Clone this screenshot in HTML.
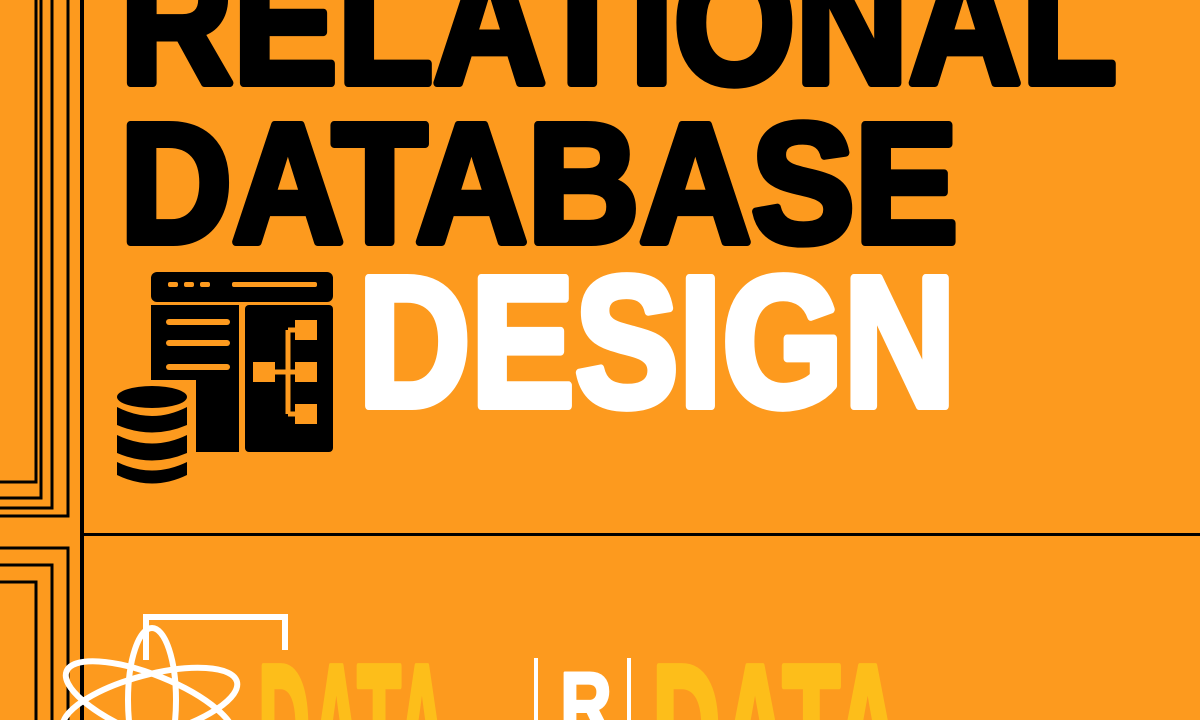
<!DOCTYPE html>
<html><head><style>
html,body{margin:0;padding:0;background:#FD9A1E;width:1200px;height:720px;overflow:hidden;}
svg{display:block}
</style></head><body>
<svg width="1200" height="720" viewBox="0 0 1200 720" xmlns="http://www.w3.org/2000/svg">
<rect width="1200" height="720" fill="#FD9A1E"/>
<g fill="none" stroke="#000" stroke-width="3">
<path d="M36 0 V482 H0"/>
<path d="M41 0 V498 H0"/>
<path d="M52 0 V508 H0"/>
<path d="M68 0 V516 H0"/>
<path d="M36 720 V582 H0"/>
<path d="M52 720 V565 H0"/>
<path d="M68 720 V548 H0"/>
</g>
<rect x="80" y="0" width="4" height="720" fill="#000"/>
<rect x="80" y="533" width="1120" height="3" fill="#000"/>
<g font-family="Liberation Sans, sans-serif" font-weight="bold" stroke-linejoin="round">
<text x="120" y="83" textLength="997" lengthAdjust="spacingAndGlyphs" font-size="174" fill="#000" stroke="#000" stroke-width="8">RELATIONAL</text>
<text x="120" y="242" textLength="838" lengthAdjust="spacingAndGlyphs" font-size="170" fill="#000" stroke="#000" stroke-width="8">DATABASE</text>
<text x="358" y="406" textLength="598" lengthAdjust="spacingAndGlyphs" font-size="186" fill="#fff" stroke="#fff" stroke-width="8">DESIGN</text>
</g>
<g>
<rect x="151" y="272" width="182" height="30" rx="6" fill="#000"/>
<rect x="168" y="282" width="10" height="5" rx="2" fill="#FD9A1E"/>
<rect x="184" y="282" width="10" height="5" rx="2" fill="#FD9A1E"/>
<rect x="200" y="282" width="10" height="5" rx="2" fill="#FD9A1E"/>
<rect x="232" y="282" width="85" height="5" rx="2" fill="#FD9A1E"/>
<rect x="151" y="305" width="88" height="147" fill="#000"/>
<rect x="245" y="305" width="88" height="147" rx="4" fill="#000"/>
<rect x="166" y="319" width="64" height="6" rx="3" fill="#FD9A1E"/>
<rect x="166" y="340" width="64" height="6" rx="3" fill="#FD9A1E"/>
<rect x="166" y="364" width="64" height="6" rx="3" fill="#FD9A1E"/>
<rect x="253" y="362" width="22" height="20" fill="#FD9A1E"/>
<rect x="295" y="320" width="22" height="20" fill="#FD9A1E"/>
<rect x="295" y="362" width="22" height="20" fill="#FD9A1E"/>
<rect x="295" y="404" width="22" height="20" fill="#FD9A1E"/>
<path d="M275 372 H288 M288 330 V414 M288 330 H295 M288 372 H295 M288 414 H295" stroke="#FD9A1E" stroke-width="5" fill="none"/>
<rect x="112" y="380" width="84" height="110" fill="#FD9A1E"/>
<ellipse cx="152" cy="397" rx="35" ry="11" fill="#000"/>
<path d="M117 407 Q152 425 187 407 V425 Q152 440 117 425Z" fill="#000"/>
<path d="M117 435 Q152 452 187 435 V453 Q152 468 117 453Z" fill="#000"/>
<path d="M117 462 Q152 479 187 462 V475 Q152 492 117 475Z" fill="#000"/>
</g>
<g fill="none" stroke="#fff" stroke-width="6">
<path d="M146 660 V617 H285 V650"/>
<ellipse cx="152" cy="700" rx="24" ry="72"/>
<ellipse cx="150" cy="705" rx="90" ry="30" transform="rotate(-15 150 705)"/>
<ellipse cx="150" cy="705" rx="90" ry="30" transform="rotate(22 150 705)"/>
</g>
<g font-family="Liberation Sans, sans-serif" font-weight="bold" stroke-linejoin="round">
<text x="258" y="790" textLength="190" lengthAdjust="spacingAndGlyphs" font-size="180" fill="#FDBE1A" stroke="#FDBE1A" stroke-width="6">DATA</text>
<text x="560" y="735" textLength="52" lengthAdjust="spacingAndGlyphs" font-size="90" fill="#fff" stroke="#fff" stroke-width="3">R</text>
<text x="652" y="790" textLength="250" lengthAdjust="spacingAndGlyphs" font-size="180" fill="#FDBE1A" stroke="#FDBE1A" stroke-width="6">DATA</text>
</g>
<rect x="534" y="658" width="4" height="62" fill="#fff"/>
<rect x="627" y="658" width="4" height="62" fill="#fff"/>
</svg>
</body></html>
